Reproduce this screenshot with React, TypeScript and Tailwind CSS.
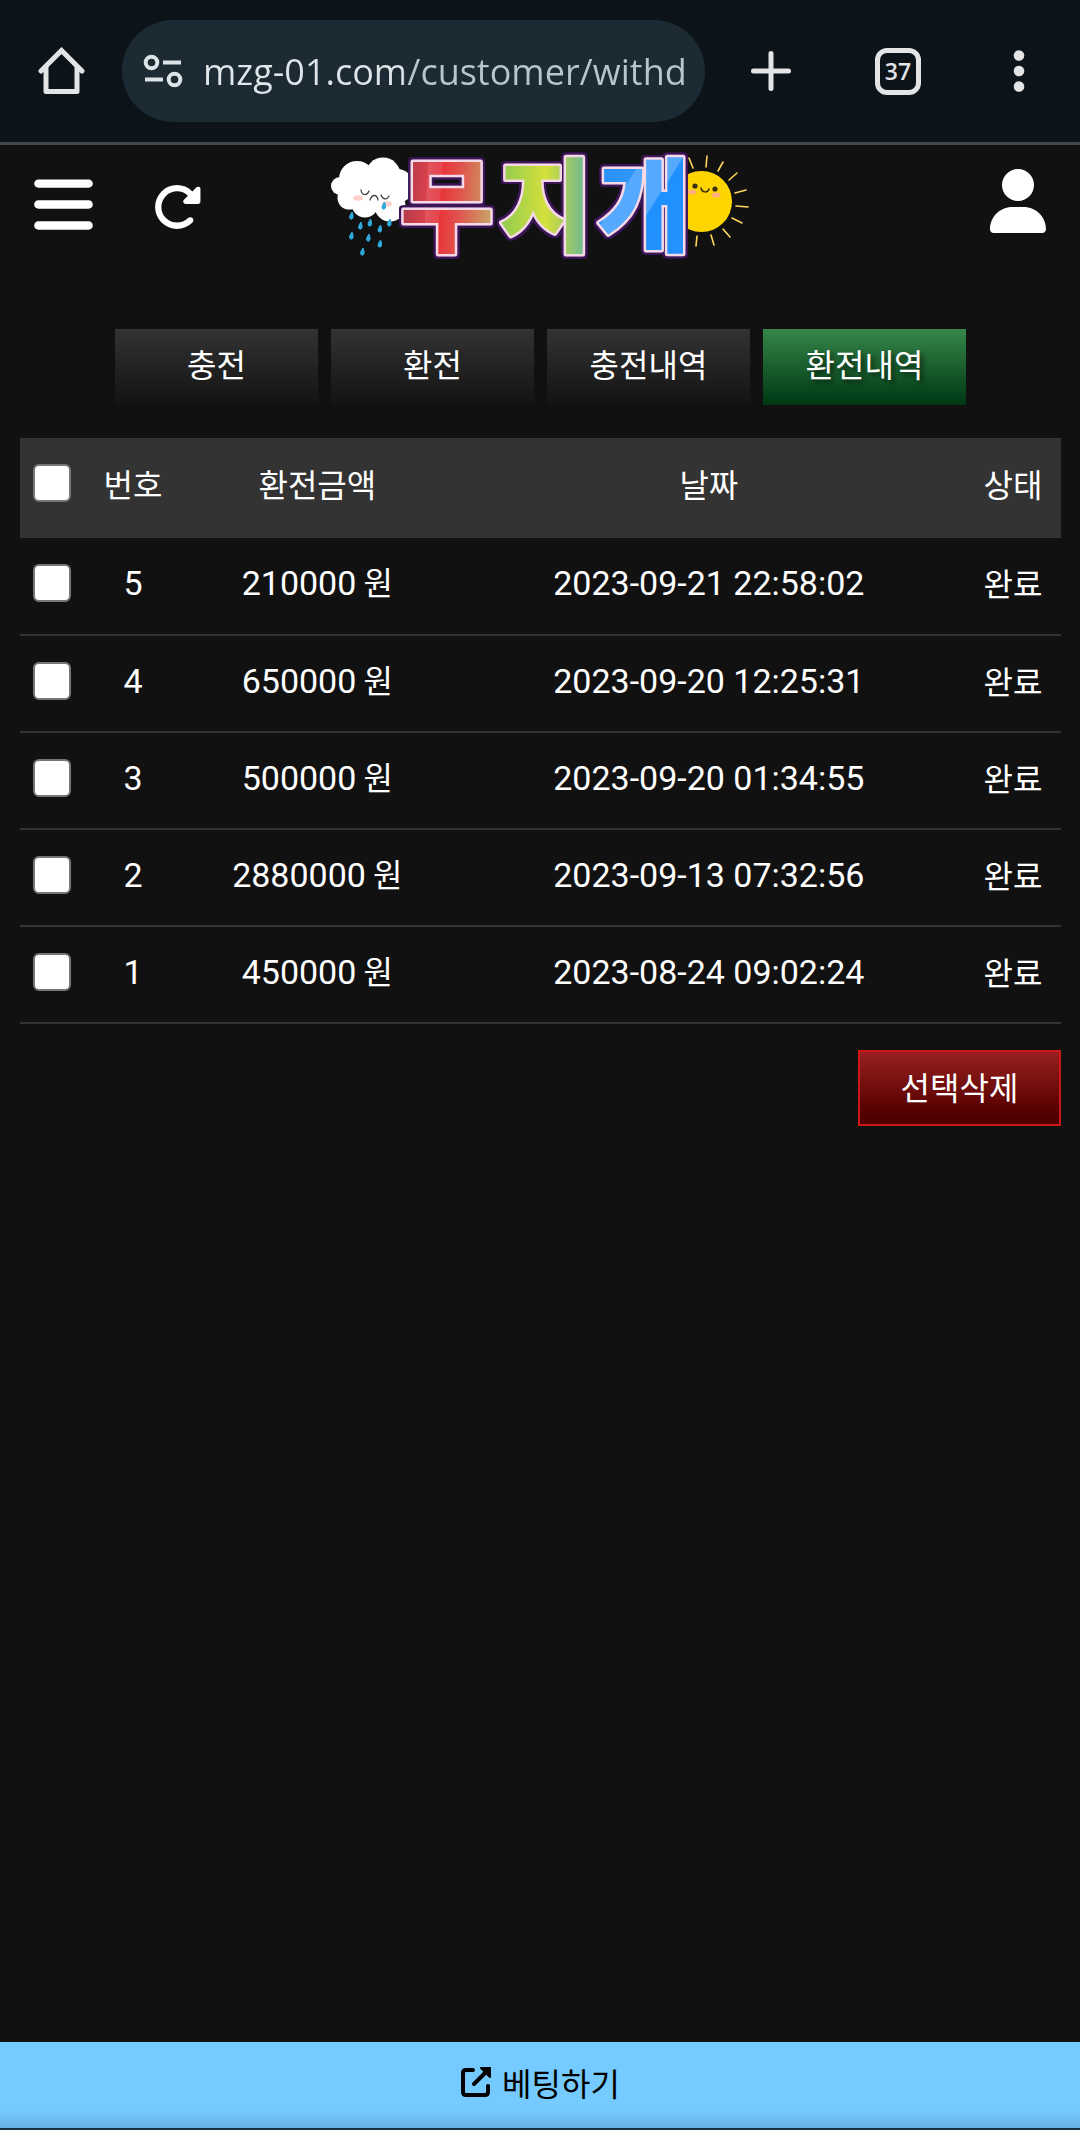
import { FaBars, FaRotateRight, FaUser } from "react-icons/fa6"

const tabs = [
  { label: "충전", active: false },
  { label: "환전", active: false },
  { label: "충전내역", active: false },
  { label: "환전내역", active: true },
]

const withdrawals = [
  { no: 5, amount: 210000, date: "2023-09-21 22:58:02", status: "완료" },
  { no: 4, amount: 650000, date: "2023-09-20 12:25:31", status: "완료" },
  { no: 3, amount: 500000, date: "2023-09-20 01:34:55", status: "완료" },
  { no: 2, amount: 2880000, date: "2023-09-13 07:32:56", status: "완료" },
  { no: 1, amount: 450000, date: "2023-08-24 09:02:24", status: "완료" },
]

const checkboxClass =
  "block mx-auto size-[38px] appearance-none rounded-md border-2 border-[#767676] bg-white checked:bg-[#1a73e8]"

function BrowserBar() {
  return (
    <div className="flex h-[145px] items-center border-b-3 border-[#43484c] bg-[#0c141a] pr-[48px] pl-[38px]">
      <button type="button" aria-label="Home" className="shrink-0">
        <svg width="47" height="48" viewBox="0 0 47 48" fill="none" stroke="#e3e4e6" strokeWidth="5" strokeLinecap="round" strokeLinejoin="round">
          <path d="M3 24 23.500 3.500 44 24" strokeLinejoin="miter" />
          <path d="M8 21V44.500H39V21" />
        </svg>
      </button>
      <div className="ml-[37px] flex h-[102px] min-w-0 flex-1 items-center rounded-full bg-[#1b2a33] pr-[10px] pl-[21px]">
        <svg className="shrink-0" width="40" height="34" viewBox="0 0 40 34" fill="none" stroke="#dde4e8" strokeWidth="4">
          <circle cx="8.500" cy="8.500" r="5.800" />
          <path d="M20 8.500H38M2 25.500H20" />
          <circle cx="31.500" cy="25.500" r="5.800" />
        </svg>
        {/* host is brighter than the path */}
        <input
          aria-label="Address"
          type="text"
          defaultValue="mzg-01.com/customer/withd"
          className="ml-[20px] h-[56px] w-0 min-w-0 flex-1 bg-linear-to-r from-[#dfe6ea] from-[200px] to-[#b9c5cd] to-[200px] bg-clip-text font-['Open_Sans',sans-serif] text-[36px] text-transparent caret-white outline-none"
        />
      </div>
      <button type="button" aria-label="New tab" className="ml-[45px] shrink-0">
        <svg width="42" height="42" viewBox="0 0 42 42" stroke="#e3e4e6" strokeWidth="5" strokeLinecap="round">
          <path d="M21 3.500V38.500M3.500 21H38.500" />
        </svg>
      </button>
      <button
        type="button"
        aria-label="Tabs"
        className="ml-[83px] flex h-[47px] w-[46px] shrink-0 items-center justify-center rounded-xl border-5 border-[#e3e4e6] font-['Open_Sans',sans-serif] text-[23px] leading-none font-semibold text-[#e3e4e6]"
      >
        37
      </button>
      <button type="button" aria-label="More" className="ml-[85px] shrink-0">
        <svg width="26" height="42" viewBox="0 0 26 42" fill="#e3e4e6">
          <circle cx="13" cy="5.500" r="5.300" />
          <circle cx="13" cy="21" r="5.300" />
          <circle cx="13" cy="36.500" r="5.300" />
        </svg>
      </button>
    </div>
  )
}

function Logo() {
  const letters = [
    { char: "무", x: 448, fill: "url(#red)" },
    { char: "지", x: 547, fill: "url(#green)" },
    { char: "개", x: 645, fill: "url(#blue)" },
  ]
  const drops = [
    [352, 216], [361, 226], [370.5, 223], [380.500, 229], [390, 223],
    [352, 236], [369, 238], [380.500, 244], [363, 252], [384.500, 206],
  ]
  return (
    <svg className="overflow-visible" width="422" height="110" viewBox="330 150 422 110" role="img" aria-label="무지개">
      <defs>
        <linearGradient id="red" x1="0" y1="0.200" x2="1" y2="0.300">
          <stop offset="0" stopColor="#a83a48" />
          <stop offset="0.300" stopColor="#d8414c" />
          <stop offset="0.310" stopColor="#e0555f" />
          <stop offset="0.450" stopColor="#e8454c" />
          <stop offset="0.460" stopColor="#e8353a" />
          <stop offset="0.650" stopColor="#e0524c" />
          <stop offset="1" stopColor="#c9a469" />
        </linearGradient>
        <linearGradient id="green" x1="0" y1="0" x2="1" y2="0">
          <stop offset="0" stopColor="#8ecb50" />
          <stop offset="0.500" stopColor="#d4e03c" />
          <stop offset="0.700" stopColor="#a4cc60" />
          <stop offset="1" stopColor="#58b3a8" />
        </linearGradient>
        <linearGradient id="blue" x1="0" y1="0" x2="1" y2="1">
          <stop offset="0" stopColor="#1f8cf5" />
          <stop offset="0.350" stopColor="#2f95fa" />
          <stop offset="0.360" stopColor="#55aaff" />
          <stop offset="0.560" stopColor="#55aaff" />
          <stop offset="0.570" stopColor="#1e90ff" />
          <stop offset="1" stopColor="#2a92fa" />
        </linearGradient>
      </defs>

      {/* sun */}
      <g stroke="#ffd65a" strokeWidth="1.600" strokeLinecap="round">
        <path d="M690 158 694 168M708 156 707 167M724 162 719 171M738 173 730 180M747 190 736 193M749 207 737 206M743 223 733 218M731 237 724 229M715 245 712 235M697 246 698 236" />
      </g>
      <circle cx="702.500" cy="201.500" r="30.500" fill="#ffd500" />
      <ellipse cx="693" cy="192" rx="4.500" ry="2.500" fill="#ffb07a" />
      <ellipse cx="717" cy="195" rx="4.500" ry="2.500" fill="#ffb07a" />
      <circle cx="696" cy="186" r="2.600" fill="#3a2f10" />
      <circle cx="716" cy="189" r="2.600" fill="#3a2f10" />
      <path d="M702 188C703 193 709 193 710 189" fill="none" stroke="#3a2f10" strokeWidth="1.500" strokeLinecap="round" />

      {/* cloud */}
      <g fill="#fff">
        <circle cx="341" cy="186" r="9" />
        <circle cx="358" cy="179" r="18" />
        <circle cx="384" cy="175" r="17.500" />
        <circle cx="398" cy="186" r="17" />
        <circle cx="350" cy="198" r="11.500" />
        <circle cx="366" cy="204" r="13.500" />
        <circle cx="391" cy="206" r="15.500" />
        <rect x="350" y="178" width="50" height="28" />
      </g>
      <ellipse cx="359" cy="198" rx="5" ry="2.800" fill="#ffcfcb" />
      <ellipse cx="388" cy="204" rx="5" ry="2.800" fill="#ffcfcb" />
      <path d="M362 190C363 196 368 196 370 191M371 200C373 194 378 194 379 200M382 195C384 200 388 200 390 196" fill="none" stroke="#444" strokeWidth="1.300" strokeLinecap="round" />
      {drops.map(([x, y]) => (
        <path key={`${x}-${y}`} d={`M${x + 1} ${y - 4}q-3 4-2.500 6 1.500 2.500 3.500 0 .5-3-1-6z`} fill="#2fa8dc" stroke="#2fa8dc" />
      ))}

      {/* wordmark */}
      <g
        className="font-['Noto_Sans_CJK_KR',sans-serif] text-[102px] font-black [filter:drop-shadow(2px_0_0_#3d1559)_drop-shadow(-2px_0_0_#3d1559)_drop-shadow(0_2px_0_#3d1559)_drop-shadow(0_-2px_0_#3d1559)]"
        textAnchor="middle"
        stroke="#f6d9e6"
        strokeWidth="5"
        strokeLinejoin="round"
        paintOrder="stroke"
      >
        {letters.map((l) => (
          <text key={l.char} x={l.x} y="244" fill={l.fill}>{l.char}</text>
        ))}
      </g>
    </svg>
  )
}

function Header() {
  return (
    <header className="grid h-[120px] grid-cols-[1fr_auto_1fr] items-center px-[34px] text-white">
      <div className="flex items-center gap-[59px]">
        <button type="button" aria-label="메뉴" className="pb-0.5">
          <FaBars className="h-[67px] w-[59px]" />
        </button>
        <button type="button" aria-label="새로고침" className="pt-1">
          <FaRotateRight className="size-[50px]" />
        </button>
      </div>
      <a href="#home">
        <Logo />
      </a>
      <button type="button" aria-label="내 정보" className="justify-self-end pb-2">
        <FaUser className="h-[64px] w-[56px]" />
      </button>
    </header>
  )
}

export default function App() {
  return (
    <div className="flex min-h-screen flex-col bg-[#111] font-['Noto_Sans_CJK_KR',sans-serif] text-[32px] leading-[48px] text-white">
      <BrowserBar />
      <Header />

      <main className="pt-[64px] pr-[19px] pl-[20px]">
        <nav className="flex justify-center gap-[13px]">
          {tabs.map((tab) => (
            <button
              key={tab.label}
              type="button"
              className={
                tab.active
                  ? "h-[76px] w-[203px] bg-linear-to-b from-[#36874a] to-[#003814] pb-2 [text-shadow:3px_3px_5px_rgba(0,0,0,0.6)]"
                  : "h-[76px] w-[203px] bg-linear-to-b from-[#333] to-[#131313] pb-2"
              }
            >
              {tab.label}
            </button>
          ))}
        </nav>

        <table className="mt-[33px] w-full table-fixed border-collapse text-center">
          <colgroup>
            <col className="w-[64px]" />
            <col className="w-[98px]" />
            <col className="w-[26%]" />
            <col />
            <col className="w-[96px]" />
          </colgroup>
          <thead>
            <tr className="h-[100px] bg-[#333]">
              <th className="pb-2.5">
                <input type="checkbox" aria-label="전체 선택" className={checkboxClass} />
              </th>
              <th className="pb-2.5 font-normal">번호</th>
              <th className="pb-2.5 font-normal">환전금액</th>
              <th className="pb-2.5 font-normal">날짜</th>
              <th className="pb-2.5 font-normal">상태</th>
            </tr>
          </thead>
          <tbody>
            {withdrawals.map((row) => (
              <tr key={row.no} className="h-[97px] border-b-2 border-[#333]">
                <td className="pb-1.5">
                  <input type="checkbox" aria-label={`${row.no}번 선택`} className={checkboxClass} />
                </td>
                <td className="pb-1.5 font-[Roboto,sans-serif] text-[34px]">{row.no}</td>
                <td className="pb-2">
                  <span className="font-[Roboto,sans-serif] text-[34px]">{row.amount}</span> 원
                </td>
                <td className="pb-1.5 font-[Roboto,sans-serif] text-[34px]">{row.date}</td>
                <td className="pb-2">{row.status}</td>
              </tr>
            ))}
          </tbody>
        </table>

        <div className="mt-[26px] flex justify-end">
          <button
            type="button"
            className="h-[76px] w-[203px] border-2 border-[#cb1717] bg-linear-to-b from-[#992020] to-[#500000] to-90% pb-1"
          >
            선택삭제
          </button>
        </div>
      </main>

      <footer className="mt-auto border-b-2 border-[#16303f] bg-linear-to-b from-[#75caff] from-80% to-[#66b2e2]">
        <a href="#betting" className="flex h-[86px] items-center justify-center gap-[10px] pb-1.5 text-black">
          <svg width="32" height="32" viewBox="0 0 32 32" fill="none" stroke="currentColor" strokeWidth="4" strokeLinecap="round" strokeLinejoin="round">
            <path d="M13 4H6Q3 4 3 7V26Q3 29 6 29H25Q28 29 28 26V20M14 18 26 6" />
            <path d="M21 2H30V11Z" fill="currentColor" strokeWidth="2" />
          </svg>
          베팅하기
        </a>
      </footer>
    </div>
  )
}
